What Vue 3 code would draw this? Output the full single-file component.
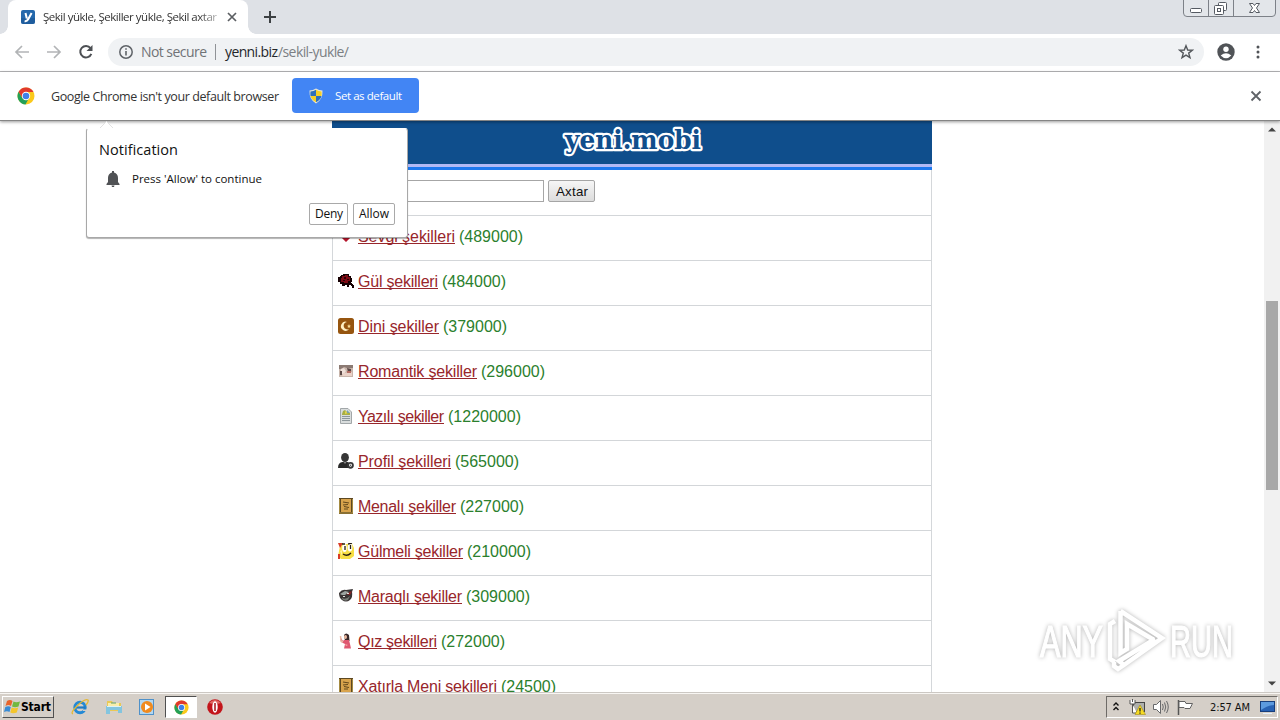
<script setup>
import { h } from 'vue'

// Single line of text set to an exact advance width.
const Label = (p) =>
  h('svg', { class: 'label', width: p.w, height: p.h, 'font-size': p.s }, [
    h('text', { x: 0, y: p.b, textLength: p.w, lengthAdjust: p.glyphs ? 'spacingAndGlyphs' : 'spacing' }, p.t),
  ])
Label.props = ['t', 'w', 'h', 's', 'b', 'glyphs']

const rows = [
  { icon: 'heart', name: 'Sevgi şekilleri', w: 97, count: '(489000)', cw: 64 },
  { icon: 'rose', name: 'Gül şekilleri', w: 80, count: '(484000)', cw: 64 },
  { icon: 'moon', name: 'Dini şekiller', w: 81, count: '(379000)', cw: 64 },
  { icon: 'photo', name: 'Romantik şekiller', w: 119, count: '(296000)', cw: 64 },
  { icon: 'page', name: 'Yazılı şekiller', w: 86, count: '(1220000)', cw: 73 },
  { icon: 'user', name: 'Profil şekilleri', w: 93, count: '(565000)', cw: 64 },
  { icon: 'book', name: 'Menalı şekiller', w: 98, count: '(227000)', cw: 64 },
  { icon: 'smile', name: 'Gülmeli şekiller', w: 105, count: '(210000)', cw: 64 },
  { icon: 'ball', name: 'Maraqlı şekiller', w: 104, count: '(309000)', cw: 64 },
  { icon: 'girl', name: 'Qız şekilleri', w: 79, count: '(272000)', cw: 64 },
  { icon: 'book', name: 'Xatırla Meni şekilleri', w: 139, count: '(24500)', cw: 55 },
]
</script>

<template>
  <div class="screen">
    <svg class="defs" width="0" height="0">
      <symbol id="chrome" viewBox="0 0 18 18">
        <circle cx="9" cy="9" r="8.500" fill="#fbc91b" />
        <path d="M1.600 4.800L5.600 11.200L9 13L12 11L8.500 17.500A8.500 8.500 0 0 1 1.600 4.800Z" fill="#23a057" />
        <path d="M9 5H16.500A8.500 8.500 0 0 0 1.600 4.800L5 10.500Z" fill="#e0392d" />
        <circle cx="9" cy="9" r="4.200" fill="#fff" />
        <circle cx="9" cy="9" r="3.300" fill="#3f80e8" />
      </symbol>
    </svg>

    <header class="tabstrip">
      <div class="tab">
        <svg class="fav" width="16" height="16" viewBox="0 0 16 16">
          <rect x="1" y="1" width="14" height="14" rx="2" fill="#2468ac" />
          <path d="M1 9H15V13Q15 15 13 15H3Q1 15 1 13Z" fill="#17528f" opacity=".5" />
          <path d="M5.500 4L6.800 9.500M11.600 4L8.200 10.300Q7 12.600 4.600 12.200" fill="none" stroke="#fff" stroke-width="2" />
        </svg>
        <div class="tabtitle"><Label t="Şekil yükle, Şekiller yükle, Şekil axtar" :w="174" :h="16" :s="11.5" :b="12" /></div>
        <svg class="tabx" width="10" height="10" viewBox="0 0 10 10"><path d="M1 1L9 9M9 1L1 9" stroke="#5b5e62" stroke-width="1.700" /></svg>
      </div>
      <svg class="plus" width="12" height="12" viewBox="0 0 12 12"><path d="M6 0V12M0 6H12" stroke="#3c4043" stroke-width="2" /></svg>
      <svg class="winbtns" width="94" height="18" viewBox="0 0 94 18">
        <path d="M.5 0V13Q.5 16.500 4 16.500H89Q92.500 16.500 92.500 13V0" fill="#e3e6ea" stroke="#7d8188" />
        <path d="M25.500 0V16M50.500 0V16" stroke="#7d8188" />
        <rect x="7.500" y="8.500" width="11" height="4" rx="1" fill="#fff" stroke="#555a62" />
        <rect x="35.500" y="2.500" width="8" height="8" rx="1" fill="#fff" stroke="#555a62" />
        <rect x="31.500" y="5.500" width="9" height="9" rx="1" fill="#fff" stroke="#555a62" />
        <rect x="34.500" y="8.500" width="3" height="3" fill="#fff" stroke="#555a62" />
        <path d="M66.500 3.500H70L71.500 5.500L73 3.500H76.500L73.500 8L76.500 12.500H73L71.500 10.500L70 12.500H66.500L69.500 8Z" fill="#fff" stroke="#555a62" />
      </svg>
    </header>

    <div class="toolbar">
      <svg class="nav" width="80" height="18" viewBox="0 0 80 18" fill="none" stroke-width="1.700">
        <path d="M15 9H2M8 3L2 9L8 15" stroke="#b2b4b6" />
        <path d="M33 9H46M40 3L46 9L40 15" stroke="#b2b4b6" />
        <path d="M76.500 5.200A5.700 5.700 0 1 0 77.300 10.800" stroke="#4d5054" stroke-width="2" />
        <path d="M78.500 2V8H72.500Z" fill="#4d5054" />
      </svg>
      <div class="omnibox">
        <svg width="14" height="14" viewBox="0 0 14 14"><circle cx="7" cy="7" r="6.200" fill="none" stroke="#5f6368" stroke-width="1.500" /><path d="M7 6V10.500M7 3.200V4.800" stroke="#5f6368" stroke-width="1.600" /></svg>
        <Label class="notsecure" t="Not secure" :w="66" :h="20" :s="14" :b="15" />
        <i class="sep"></i>
        <Label class="host" t="yenni.biz" :w="53" :h="20" :s="14" :b="15" />
        <Label class="path" t="/sekil-yukle/" :w="71" :h="20" :s="14" :b="15" />
        <svg class="star" width="16" height="16" viewBox="0 0 16 16"><path d="M8 1.700L9.700 6L14.400 6.200L10.700 9.100L12 13.700L8 11.100L4 13.700L5.300 9.100L1.600 6.200L6.300 6Z" fill="none" stroke="#53575b" stroke-width="1.400" /></svg>
      </div>
      <svg class="avatar" width="18" height="18" viewBox="0 0 18 18"><circle cx="9" cy="9" r="8.700" fill="#505357" /><circle cx="9" cy="6.300" r="2.700" fill="#fff" /><path d="M3.700 12.500Q9 8 14.300 12.500Q9 18 3.700 12.500Z" fill="#fff" /></svg>
      <svg class="dots" width="4" height="14" viewBox="0 0 4 14" fill="#505357"><circle cx="2" cy="2" r="1.500" /><circle cx="2" cy="7" r="1.500" /><circle cx="2" cy="12" r="1.500" /></svg>
    </div>

    <div class="infobar">
      <svg class="chromeic" width="18" height="18"><use href="#chrome" /></svg>
      <Label class="infotext" t="Google Chrome isn't your default browser" :w="228" :h="18" :s="12.5" :b="13.5" />
      <button class="setdef">
        <svg width="14" height="16" viewBox="0 0 14 16">
          <path d="M7 .5Q10 2.500 13.500 2.500Q14 11.500 7 15.500Q0 11.500 .5 2.500Q4 2.500 7 .5Z" fill="#e7e7d8" />
          <path d="M7 1.800V8H1.500Q1.200 6 1.500 3.500Q4.500 3.500 7 1.800Z" fill="#2f6fbc" /><path d="M7 1.800V8H12.500Q12.800 6 12.500 3.500Q9.500 3.500 7 1.800Z" fill="#f5cf28" />
          <path d="M7 14.200V8H1.500Q2.500 12 7 14.200Z" fill="#f5cf28" /><path d="M7 14.200V8H12.500Q11.500 12 7 14.200Z" fill="#2f6fbc" />
        </svg>
        <Label t="Set as default" :w="67" :h="16" :s="11.5" :b="12" />
      </button>
      <svg class="infox" width="12" height="12" viewBox="0 0 12 12"><path d="M1.500 1.500L10.500 10.500M10.500 1.500L1.500 10.500" stroke="#5f6368" stroke-width="1.800" /></svg>
    </div>

    <main class="view">
      <div class="page">
        <div class="banner">
          <svg class="brand" width="150" height="43" viewBox="0 0 150 43">
            <text x="8" y="28" textLength="136" lengthAdjust="spacingAndGlyphs" class="logo">yeni.mobi</text>
          </svg>
        </div>
        <div class="search">
          <input class="field" />
          <button class="axtar"><Label t="Axtar" :w="32" :h="18" :s="13.3" :b="14" /></button>
        </div>
        <div v-for="r in rows" :key="r.name" class="row">
          <svg class="ric" width="16" height="16" viewBox="0 0 16 16">
            <path v-if="r.icon === 'heart'" d="M8 14L1 7Q0 2 4.500 2Q7 2 8 4.500Q9 2 11.500 2Q16 2 15 7Z" fill="#b5152b" />
            <g v-else-if="r.icon === 'rose'">
              <path d="M3 2H5V1H11V3H13V5H14V9H13V10H14V11H15V12H16V15H14V13H13V12H11V14H9V12H7V13H4V11H2V9H0V4H2V3H3Z" fill="#160002" />
              <path d="M4 3H7V2H10V4H12V8H10V10H6V9H3V5H4Z" fill="#7d0a14" /><path d="M6 4H8V6H6ZM9 6H11V7H9ZM5 7H7V8H5Z" fill="#2a0004" />
            </g>
            <g v-else-if="r.icon === 'moon'">
              <rect width="16" height="16" rx="2.500" fill="#96550f" />
              <path d="M9 4A4.500 4.500 0 1 0 11 11A3.700 3.700 0 1 1 9 4Z" fill="#fff0c4" /><path d="M11 6L11.600 7.500L13 7.700L12 8.600L12.200 10L11 9.300L9.800 10L10 8.600L9 7.700L10.400 7.500Z" fill="#f8dc96" />
            </g>
            <g v-else-if="r.icon === 'photo'">
              <rect x="1" y="2" width="14" height="12" fill="#c8b5ab" /><path d="M1 2H15V5H9L6 4L3 6H1Z" fill="#8b7a73" /><path d="M3 6L6 5L8 8L6 11H3Z" fill="#efe0d9" /><path d="M9 5L13 6V8L10 9ZM2 8H4V12H2Z" fill="#5a4745" /><path d="M5 10L14 9V13H4Z" fill="#ead2c8" /><path d="M9 8H13V10H9Z" fill="#b56c63" />
            </g>
            <g v-else-if="r.icon === 'page'">
              <path d="M2.500 .5H10L13.500 4V15.500H2.500Z" fill="#d9dddd" stroke="#a2a7a9" /><path d="M4 8.500H12M4 10.500H12M4 12.500H12" stroke="#8d979b" /><path d="M4 6L5 3L7 2L9 4L12 5V7H4Z" fill="#a8ae45" /><path d="M7 3L10 5L7 6Z" fill="#e5d64d" /><path d="M9 2L12 5H9Z" fill="#77a3ae" />
            </g>
            <g v-else-if="r.icon === 'user'">
              <ellipse cx="7" cy="4.500" rx="3.900" ry="4.500" fill="#363636" /><path d="M0 15Q0 9.500 4.500 9H9.500Q12 9.500 12 15Z" fill="#292929" /><path d="M5.500 9L7 11L8.500 9Z" fill="#888" /><circle cx="12.500" cy="12.300" r="2.400" fill="#fff" stroke="#373737" stroke-width="1.900" /><circle cx="12.500" cy="12.300" r=".7" fill="#444" />
            </g>
            <g v-else-if="r.icon === 'book'">
              <rect x="1" y="0" width="14" height="16" fill="#5d4822" /><rect x="3" y="1" width="10" height="13" fill="#d9a44d" /><path d="M1 15H15" stroke="#b89845" /><path d="M5 4L11 5M5 7L10 6.500M6 8.500L11 9.500M6 11L10 11" fill="none" stroke="#63481c" stroke-width="1.200" /><path d="M1.500 1V15M14.500 1V15" stroke="#a58b41" />
            </g>
            <g v-else-if="r.icon === 'smile'">
              <path d="M2 3L5 1L14 1L16 5V13L12 16H3L0 13Z" fill="#f7df45" /><path d="M0 0H5L2 5ZM0 11H2V16H0Z" fill="#d93b27" /><ellipse cx="6.500" cy="5" rx="2.300" ry="4" fill="#fff" /><ellipse cx="12" cy="4.500" rx="2.300" ry="4" fill="#fff" /><path d="M7 3V7M12.500 2V6M4 1L7 1M10 1L14 0M5 11Q9 14 13 10" fill="none" stroke="#282010" stroke-width="1.300" /><path d="M2 8L4 7V13Z" fill="#fff3a3" />
            </g>
            <g v-else-if="r.icon === 'ball'">
              <path d="M1 5Q4 1 8 2L15 1L14 4Q15 9 12 12Q8 15 4 12Q1 10 1 5Z" fill="#393434" /><path d="M2 6L7 3L11 4L7 7L4 7Z" fill="#9ca4a1" /><path d="M8 6L14 3L12 7Z" fill="#8f2323" /><path d="M4 10Q8 12 12 8L10 12Q7 14 4 11Z" fill="#777b75" /><path d="M9 5H11V6H9ZM5 8H7V9H5Z" fill="#e0e0dc" />
            </g>
            <g v-else>
              <path d="M6 2Q8-1 11 2L11.500 8H7Z" fill="#382728" /><ellipse cx="7.500" cy="4" rx="1.500" ry="2.100" fill="#e7b79e" /><path d="M6 7H11L12 11L13 15.500H6L7 11L3 9L2 5H3L5 8Z" fill="#df5871" /><path d="M2.500 3L3 8L5 9" stroke="#e9b9a4" stroke-width="1.500" fill="none" /><path d="M7 11L10 12L8 13Z" fill="#f2ada6" />
            </g>
          </svg>
          <a class="link"><Label :t="r.name" :w="r.w" :h="15" :s="16" :b="14" /></a>
          <Label class="count" :t="r.count" :w="r.cw" :h="18" :s="16" :b="14" />
        </div>
      </div>
      <div class="scroll">
        <svg width="8" height="5"><path d="M0 4.500L4 .5L8 4.500Z" fill="#444" /></svg>
        <div class="thumb"></div>
        <svg width="8" height="5"><path d="M0 .5L4 4.500L8 .5Z" fill="#444" /></svg>
      </div>
      <svg class="watermark" width="204" height="70" viewBox="0 0 204 70">
        <g fill="#fff" stroke="#fff" stroke-width="1.200">
          <text x="4" y="52" textLength="63" lengthAdjust="spacingAndGlyphs">ANY</text>
          <text x="134" y="52" textLength="63" lengthAdjust="spacingAndGlyphs">RUN</text>
        </g>
        <path d="M79 16L74 19V54L79 57M84.500 8V48L91 44V19L118 35M84.500 6L126 33L88 60L83 56L119 34M84.500 6V16M88 60L82 64L78 61V57" fill="none" stroke="#fff" stroke-width="4.500" />
      </svg>
    </main>

    <svg class="notch" width="18" height="9"><path d="M.5 8.500L8.500 .5L16.500 8.500" fill="#fff" stroke="#e2e2e2" /></svg>
    <section class="popup">
      <Label class="ptitle" t="Notification" :w="79" :h="20" :s="14.500" :b="15" />
      <div class="pmsg">
        <svg width="14" height="16" viewBox="0 0 14 16"><path d="M6 0H8V1.500Q12 2.500 12 7V11L13.500 13V14H.5V13L2 11V7Q2 2.500 6 1.500ZM5.500 14.500H8.500L8 16H6Z" fill="#505255" /></svg>
        <Label t="Press 'Allow' to continue" :w="130" :h="16" :s="11.500" :b="12" />
      </div>
      <div class="pbtns">
        <button><Label t="Deny" :w="28" :h="16" :s="12" :b="12" /></button>
        <button><Label t="Allow" :w="30" :h="16" :s="12" :b="12" /></button>
      </div>
    </section>

    <footer class="taskbar">
      <div class="start">
        <svg width="17" height="16" viewBox="0 0 17 16"><path d="M3 2Q6 0 8.500 2L7 7Q4.500 5 1.500 7Z" fill="#e9642b" /><path d="M9.500 2.500Q12 4 16 2.500L14.500 7.500Q11 9 8 7.500Z" fill="#71b83f" /><path d="M1.300 8Q4.500 6.500 6.800 8L5.500 13Q3 11.500 0 13Z" fill="#398bd5" /><path d="M7.700 8.500Q11 10 14.200 8.500L12.800 13.500Q9 15 6.300 13.500Z" fill="#f4c52c" /></svg>
        <Label t="Start" :w="30" :h="16" :s="12" :b="12" />
      </div>
      <div class="task"><svg width="18" height="18" viewBox="0 0 18 18"><circle cx="9" cy="9.500" r="5.200" fill="none" stroke="#2489d5" stroke-width="3" /><path d="M5 9.500H14.500" stroke="#1f7bc4" stroke-width="2.200" /><path d="M12 11.500H18V13H12Z" fill="#d4cfc8" /><path d="M2 16Q-1 15 6 8Q14 0 17 2Q18 3 15 7" fill="none" stroke="#e5b832" stroke-width="1.300" /></svg></div>
      <div class="task"><svg width="18" height="18" viewBox="0 0 18 18"><path d="M2 3H7L8 5H16V13H2Z" fill="#e9c956" /><path d="M3 5H14V8H3Z" fill="#f9edac" /><path d="M1 8H17V15H13V12H5V16H1Z" fill="#83c5df" /><path d="M2 8.500H16" stroke="#dff2f4" /><path d="M6 5H11" stroke="#62a26b" /></svg></div>
      <div class="task"><svg width="18" height="18" viewBox="0 0 18 18"><rect x="1.500" y="1.500" width="14" height="15" fill="#b3d7f0" stroke="#4f91c9" /><circle cx="9" cy="9" r="6" fill="#f08a1e" /><path d="M7 5.500L12.500 9L7 12.500Z" fill="#fff" /></svg></div>
      <div class="task active"><svg width="15" height="15"><use href="#chrome" /></svg></div>
      <div class="task"><svg width="18" height="18" viewBox="0 0 18 18"><circle cx="9" cy="9" r="7.800" fill="#c3151b" /><path d="M3 5Q9-1 15 5Q9 7 3 5Z" fill="#df6b65" /><ellipse cx="9" cy="9" rx="2.700" ry="5.700" fill="#fff" /><path d="M9 5V13" stroke="#a51318" stroke-width="1.500" /></svg></div>
      <div class="tray">
        <svg class="chev" width="6" height="9" viewBox="0 0 6 9"><path d="M.5 3.500L3 1L5.500 3.500M.5 8L3 5.500L5.500 8" fill="none" stroke="#111" stroke-width="1.400" /></svg>
        <svg class="net" width="17" height="16" viewBox="0 0 17 16"><rect x="4.500" y="3.500" width="11" height="9" fill="#aeb0ad" stroke="#444" /><path d="M1 1V5H6V1M3.500 0V3M3.500 5V14H8" fill="#fff" stroke="#555" /><path d="M11 6L16.500 15.500H6Z" fill="#f7db22" stroke="#a38b18" stroke-width=".6" /><path d="M11 9V12.500M11 13.500V14.700" stroke="#222" stroke-width="1.300" /></svg>
        <svg class="vol" width="16" height="16" viewBox="0 0 16 16" fill="none" stroke="#67686a"><path d="M.5 5.500H3.500L7.500 1.500V14.500L3.500 10.500H.5Z" fill="#fff" /><path d="M9.500 5Q11 8 9.500 11M11.500 3.500Q14 8 11.500 12.500M13.500 2Q17 8 13.500 14" /></svg>
        <svg class="flag" width="17" height="16" viewBox="0 0 17 16"><path d="M1.500 1V16" stroke="#555" stroke-width="1.500" /><path d="M2 2.500H8L9 4.500H15.500L13 9.500H8L7 8.500H2Z" fill="#fff" stroke="#626262" /></svg>
        <Label class="clock" t="2:57 AM" :w="40" :h="16" :s="11" :b="12" />
        <svg class="desk" width="15" height="14" viewBox="0 0 15 14"><rect x=".5" y="1.500" width="14" height="10" fill="#2862b4" stroke="#183e7c" /><path d="M1 2H14V5Q8 5 1 10Z" fill="#5c9adf" /><path d="M3 13.500H12" stroke="#e6f0fa" /></svg>
      </div>
    </footer>
  </div>
</template>

<style>
body { margin: 0; overflow: hidden; }
</style>

<style scoped>
* { box-sizing: border-box; }
.screen { position: relative; width: 1280px; height: 720px; background: #fff; overflow: hidden; display: flex; flex-direction: column; font-family: "Open Sans", "Noto Sans", sans-serif; color: #333; }
svg { display: block; flex: none; }
.label { overflow: visible; fill: currentColor; }
button { font: inherit; padding: 0; margin: 0; display: flex; align-items: center; justify-content: center; }
.defs { position: absolute; }
.tabstrip { height: 34px; flex: none; background: #dee1e6; display: flex; align-items: flex-start; }
.tab { width: 240px; height: 34px; margin-left: 8px; background: #fff; border-radius: 8px 8px 0 0; display: flex; align-items: center; padding: 0 0 0 12px; position: relative; }
.tab::before, .tab::after { content: ""; position: absolute; bottom: 0; width: 8px; height: 8px; }
.tab::before { left: -8px; background: radial-gradient(circle at 0 0, transparent 7.500px, #fff 8px); }
.tab::after { right: -8px; background: radial-gradient(circle at 100% 0, transparent 7.500px, #fff 8px); }
.tabtitle { margin-left: 7px; width: 174px; -webkit-mask-image: linear-gradient(90deg, #000 155px, rgba(0,0,0,.35)); }
.tabx { margin-left: 10px; }
.plus { margin: 11px 0 0 16px; }
.winbtns { margin-left: auto; margin-right: 3px; }
.toolbar { height: 38px; flex: none; border-bottom: 1px solid #b7b7b9; display: flex; align-items: center; padding-bottom: 1px; }
.nav { margin-left: 14px; }
.omnibox { margin-left: 14px; width: 1096px; height: 28px; border-radius: 14px; background: #f0f2f4; display: flex; align-items: center; padding-left: 11px; }
.notsecure { margin-left: 8px; color: #707377; }
.sep { width: 1px; height: 16px; background: #909397; margin: 0 9px 0 8px; }
.host { color: #24272a; }
.path { color: #7b7f83; }
.star { margin-left: auto; margin-right: 10px; }
.avatar { margin-left: 13px; }
.dots { margin-left: 21px; }
.infobar { height: 49px; flex: none; border-bottom: 1px solid #858585; display: flex; align-items: center; box-shadow: 0 1px 3px rgba(0,0,0,.4); z-index: 1; }
.chromeic { margin-left: 17px; }
.infotext { margin-left: 16px; }
.setdef { margin-left: 13px; margin-bottom: 1px; width: 127px; height: 35px; border: 0; border-radius: 4px; background: #4285f4; color: #fff; gap: 12px; }
.infox { margin-left: auto; margin-right: 18px; }
.view { position: relative; height: 571px; flex: none; overflow: hidden; }
.page { width: 600px; margin-left: 332px; font-family: "Liberation Sans", Arial, sans-serif; border: solid #d4d7da; border-width: 0 1px; }
.banner { height: 49px; margin: 0 -1px; background: linear-gradient(#0f4e8c 43px, #b2b9f5 43px 46px, #1d78ee 46px); display: flex; justify-content: center; }
.brand { overflow: visible; }
.logo { font: bold 26px "DejaVu Serif", serif; fill: #104e8c; stroke: #fff; stroke-width: 4.500px; paint-order: stroke; stroke-linejoin: round; }
.search { height: 46px; border-bottom: 1px solid #d3d6d9; display: flex; align-items: center; padding: 0 0 3px 5px; }
.field { width: 206px; height: 22px; border: 1px solid #a6a6a6; padding: 0; }
.axtar { width: 47px; height: 22px; margin-left: 4px; border: 1px solid #a5a5a5; border-radius: 2px; background: linear-gradient(#f6f6f6, #dcdcdc); color: #111; }
.row { height: 45px; border-bottom: 1px solid #d3d6d9; display: flex; align-items: flex-start; padding: 12px 0 0 5px; }
.ric { margin-right: 4px; }
.link { color: #98262b; border-bottom: 1px solid #98262b; height: 16px; margin-right: 4px; }
.count { color: #2b802d; }
.scroll { position: absolute; right: 0; top: 0; width: 16px; height: 571px; background: #f1f1f1; display: flex; flex-direction: column; align-items: center; justify-content: space-between; padding: 6px 0 6px; }
.thumb { width: 12px; height: 189px; background: #a8a8a8; margin-bottom: 23px; }
.watermark { position: absolute; left: 1036px; top: 484px; filter: drop-shadow(0 0 2px rgba(0,0,0,.3)); font: 44px "Liberation Sans", sans-serif; }
.notch { position: absolute; left: 98px; top: 121px; z-index: 2; }
.popup { position: absolute; left: 86px; top: 128px; width: 322px; height: 110px; z-index: 3; background: #fff; border: 1px solid #a8a8a8; border-top-color: #fff; border-radius: 3px; box-shadow: 0 1px 1px rgba(0,0,0,.3); padding: 11px 12px 0 12px; color: #111; }
.pmsg { display: flex; align-items: center; margin-top: 11px; padding-left: 7px; gap: 12px; }
.pbtns { display: flex; justify-content: flex-end; gap: 5px; margin-top: 16px; }
.pbtns button { width: 39px; height: 22px; border: 1px solid #a9a9a9; border-radius: 2px; background: #fff; color: #111; }
.pbtns button + button { width: 42px; }
.taskbar { height: 28px; flex: none; background: #d5cfc8; border-top: 1px solid #ccc8c3; box-shadow: inset 0 1px #f8f6f3; display: flex; align-items: flex-start; padding: 3px 2px 0 2px; }
.start { width: 52px; height: 22px; border: 1px solid; border-color: #fff #505050 #505050 #fff; display: flex; align-items: center; color: #000; font-family: "DejaVu Sans Condensed", "DejaVu Sans", sans-serif; font-weight: bold; gap: 0; padding-left: 1px; }
.task { width: 32px; height: 22px; margin-right: 1.700px; display: flex; align-items: center; justify-content: center; }
.start + .task { margin-left: 10px; }
.active { background: #fff; border: 1px solid; border-color: #505050 #fff #fff #505050; }
.tray { margin-left: auto; width: 172px; height: 22px; border: 1px solid; border-color: #6e6b67 #fff #fff #6e6b67; display: flex; align-items: center; color: #111; font-family: "DejaVu Sans Condensed", "DejaVu Sans", sans-serif; }
.chev { margin-left: 6px; margin-bottom: 2px; }
.net { margin-left: 10px; }
.vol { margin-left: 7px; }
.flag { margin-left: 8px; }
.clock { margin-left: 16px; }
.desk { margin-left: 10px; }
</style>
